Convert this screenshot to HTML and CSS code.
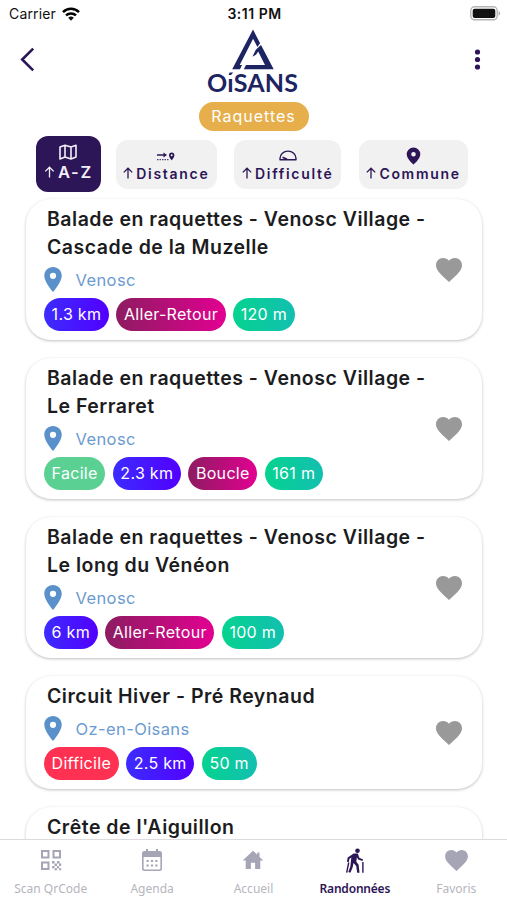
FILE: index.html
```html
<!DOCTYPE html>
<html lang="fr">
<head>
<meta charset="utf-8">
<title>Oisans - Raquettes</title>
<link rel="stylesheet" href="styles.css">
</head>
<body>
<svg width="0" height="0" class="defs" aria-hidden="true">
  <symbol id="heart" viewBox="2 3 20 18.4"><path d="M12 21.35l-1.45-1.32C5.4 15.36 2 12.28 2 8.5 2 5.42 4.42 3 7.5 3c1.74 0 3.41.81 4.5 2.09C13.09 3.81 14.76 3 16.5 3 19.58 3 22 5.42 22 8.5c0 3.78-3.4 6.86-8.55 11.54z"/></symbol>
  <symbol id="pin" viewBox="5 2 14 20"><path d="M12 2C8.13 2 5 5.13 5 9c0 5.25 7 13 7 13s7-7.75 7-13c0-3.87-3.13-7-7-7zm0 9.5A2.5 2.5 0 1 1 12 6.5a2.5 2.5 0 0 1 0 5z"/></symbol>
  <symbol id="up" viewBox="0 0 10 12"><path d="M5 11.5V1.5M.8 5.4L5 1.2l4.2 4.2" fill="none" stroke="currentColor" stroke-width="1.3"/></symbol>
</svg>
<div class="app">
  <div class="status">
    <div class="carrier">Carrier
      <svg width="18" height="14" viewBox="0 0 18 14"><g fill="none" stroke="#000" stroke-width="2.5"><path d="M1 5.1a11.5 11.5 0 0 1 16 0"/><path d="M4 8.4a7.2 7.2 0 0 1 10 0"/></g><path d="M6.2 10.8a4 4 0 0 1 5.6 0L9 13.7z"/></svg>
    </div>
    <div class="clock">3:11 PM</div>
    <svg class="battery" width="31" height="15" viewBox="0 0 31 15"><rect x=".8" y=".8" width="26.4" height="13" rx="3.8" fill="#fff" stroke="#b5b5b5" stroke-width="1.4"/><rect x="2.7" y="2.7" width="22.6" height="9.2" rx="2"/><path d="M28.6 5c2 .8 2 3.8 0 4.6z" fill="#aaa"/></svg>
  </div>
  <header class="header">
    <svg width="15" height="25" viewBox="0 0 15 25"><path d="M13.2 1.6L2.2 12.5l11 10.9" fill="none" stroke="#2d1657" stroke-width="2.6"/></svg>
    <div class="brand">
      <svg class="logo" width="92" height="66" viewBox="0 0 92 66">
        <g fill="#1c2461">
          <path d="M45 1.500L24.200 41.300H32l2-4.400h-2.300L45.100 10.700l4.300 8.300 2.700-3.800z"/>
          <path d="M53 17.100L47.800 21.700l-3.400 7 3.600-2 2.200-3.200 6.800 13.400H38l-2.200 4.400h29.900z"/>
        </g>
        <g class="wordmark"><text x="-1" y="63.600" textLength="91" lengthAdjust="spacing">OıSANS</text></g>
        <path d="M20.600 47l1-2.600h3.600L23 47z" fill="#1c2461"/>
      </svg>
      <div class="category">Raquettes</div>
    </div>
    <svg class="dots" width="7" height="21" viewBox="0 0 7 21"><circle cx="3.5" cy="3" r="2.6"/><circle cx="3.5" cy="10.5" r="2.6"/><circle cx="3.5" cy="18" r="2.6"/></svg>
  </header>
  <nav class="sorts">
    <button class="sort az">
      <svg width="18" height="16" viewBox="0 0 18 16"><path class="line" stroke-width="1.6" d="M1 3l5-1.8 6 1.8 5-1.8v11.9l-5 1.8-6-1.8-5 1.8zM6 1.2v11.9M12 3v11.9"/></svg>
      <span><svg class="arrow" width="11" height="12"><use href="#up"/></svg>A-Z</span>
    </button>
    <button class="sort distance">
      <svg width="18" height="9" viewBox="0 0 18 9"><path d="M0 3h8" stroke="currentColor" stroke-width="1.5"/><path d="M6.5.6L10 3 6.500 5.400z"/><path d="M0 7.700h12" stroke="currentColor" stroke-width="1" stroke-dasharray="1.500 1"/><path d="M14.700.6a2.700 2.700 0 0 0-2.700 2.700c0 2.200 2.700 5 2.700 5s2.700-2.800 2.700-5A2.700 2.700 0 0 0 14.700.6zm0 3.600a1 1 0 1 1 0-2 1 1 0 0 1 0 2z" fill-rule="evenodd"/></svg>
      <span><svg class="arrow" width="10" height="12"><use href="#up"/></svg>Distance</span>
    </button>
    <button class="sort difficulty">
      <svg width="18" height="11" viewBox="0 0 18 11"><path class="line" d="M1 9.800V8.500a8 7.400 0 0 1 16 0v1.300z" stroke-width="1.400"/><path class="line" d="M3.500 7.300L8 9.300" stroke-width="1.500"/></svg>
      <span><svg class="arrow" width="10" height="12"><use href="#up"/></svg>Difficulté</span>
    </button>
    <button class="sort town">
      <svg width="15" height="18" viewBox="0 0 15 18"><path fill-rule="evenodd" d="M7.500.5A6.800 6.800 0 0 0 .7 7.200C.7 12 7.500 17.500 7.500 17.500s6.800-5.500 6.800-10.300A6.800 6.800 0 0 0 7.500.5zm0 9a2.300 2.300 0 1 1 0-4.600 2.300 2.300 0 0 1 0 4.600z"/></svg>
      <span><svg class="arrow" width="10" height="12"><use href="#up"/></svg>Commune</span>
    </button>
  </nav>
  <main class="list">
    <article class="card">
      <div class="info">
        <h2>Balade en raquettes - Venosc Village -<br>Cascade de la Muzelle</h2>
        <div class="place"><svg width="18" height="25"><use href="#pin"/></svg>Venosc</div>
        <div class="tags"><span class="km">1.3 km</span><span class="kind">Aller-Retour</span><span class="climb">120 m</span></div>
      </div>
      <svg class="fav" width="26" height="24"><use href="#heart"/></svg>
    </article>
    <article class="card">
      <div class="info">
        <h2>Balade en raquettes - Venosc Village -<br>Le Ferraret</h2>
        <div class="place"><svg width="18" height="25"><use href="#pin"/></svg>Venosc</div>
        <div class="tags"><span class="easy">Facile</span><span class="km">2.3 km</span><span class="kind">Boucle</span><span class="climb">161 m</span></div>
      </div>
      <svg class="fav" width="26" height="24"><use href="#heart"/></svg>
    </article>
    <article class="card">
      <div class="info">
        <h2>Balade en raquettes - Venosc Village -<br>Le long du Vénéon</h2>
        <div class="place"><svg width="18" height="25"><use href="#pin"/></svg>Venosc</div>
        <div class="tags"><span class="km">6 km</span><span class="kind">Aller-Retour</span><span class="climb">100 m</span></div>
      </div>
      <svg class="fav" width="26" height="24"><use href="#heart"/></svg>
    </article>
    <article class="card">
      <div class="info">
        <h2>Circuit Hiver - Pré Reynaud</h2>
        <div class="place"><svg width="18" height="25"><use href="#pin"/></svg>Oz-en-Oisans</div>
        <div class="tags"><span class="hard">Difficile</span><span class="km">2.5 km</span><span class="climb">50 m</span></div>
      </div>
      <svg class="fav" width="26" height="24"><use href="#heart"/></svg>
    </article>
    <article class="card last">
      <div class="info"><h2>Crête de l'Aiguillon</h2></div>
    </article>
  </main>
  <nav class="tabs">
    <a class="tab"><svg width="22" height="22" viewBox="0 0 22 22"><g fill="none" stroke="currentColor" stroke-width="2"><path d="M2 2h6.500v6.500H2zM13.500 2H20v6.500h-6.500zM2 13.500h6.500V20H2z"/></g><path d="M12 12h2.500v2.500H12zM17 12h2.500v2.500H17zM14.500 14.500H17V17h-2.500zM19 14.500h2.200V17H19zM12 17h2.500v2.200H12zM17 17h2v2.200h-2zM14.500 19.200H17v2h-2.500zM19 19.200h2.200v2H19z"/></svg><span>Scan QrCode</span></a>
    <a class="tab"><svg width="22" height="24" viewBox="0 0 22 24"><path fill-rule="evenodd" d="M3.500 3H5V1h2v2h8V1h2v2h1.500A2.500 2.500 0 0 1 21 5.500V20.500A2.500 2.500 0 0 1 18.500 23h-15A2.500 2.500 0 0 1 1 20.500v-15A2.500 2.500 0 0 1 3.500 3zM2.600 9v11.500a1 1 0 0 0 1 1h14.800a1 1 0 0 0 1-1V9z"/><path d="M5.500 13h11M5.500 17.500h11" stroke="currentColor" stroke-width="2.200" stroke-dasharray="2.200"/></svg><span>Agenda</span></a>
    <a class="tab"><svg width="22" height="20" viewBox="0 0 22 20"><path d="M11 .8L.7 10.500h3V19h5.200v-6.200h4.200V19h5.200v-8.500h3L17.500 7V2.500h-2.200v2.300z"/></svg><span>Accueil</span></a>
    <a class="tab active"><svg width="18" height="25" viewBox="0 0 18 25"><circle cx="11.500" cy="2.700" r="2.300"/><path d="M7.700 5.500h4.100l1.500 4.200 3.800 1.700-.6 1.700-4.400-1.600-1.200-2.200-.6 4.400 2.300 3.100.9 7.900h-2.300l-1-6.600-2.700-3.200-.9 4.500-2.200 5.400-2.100-.8 2-5.200 1-9.400-1.900 1.600-.6 3.100-1.900-.4.800-4.100z"/><path d="M16.900 14v10.800M2.700 14.500L.7 24.700" stroke="currentColor" stroke-width="1.400"/></svg><span>Randonnées</span></a>
    <a class="tab"><svg width="23" height="21"><use href="#heart"/></svg><span>Favoris</span></a>
  </nav>
</div>
</body>
</html>
```
FILE: styles.css
```css
* { box-sizing: border-box; }
body { margin: 0; background: #fff; font-family: Inter, sans-serif; }
.defs { display: block; height: 0; }
svg { fill: currentColor; flex: none; }
.line { fill: none; stroke: currentColor; stroke-linejoin: round; }
.app { width: 507px; height: 900px; overflow: hidden; display: flex; flex-direction: column; }
.status { height: 28px; flex: none; display: grid; grid-template-columns: 1fr auto 1fr; align-items: center; padding: 0 7px 1px 9px; color: #111; }
.carrier { display: flex; align-items: center; gap: 6px; font-size: 14px; letter-spacing: .15px; }
.clock { font-size: 14px; font-weight: 600; letter-spacing: .5px; }
.battery { justify-self: end; margin-right: -1px; margin-top: -1px; }
.header { height: 108px; flex: none; display: flex; justify-content: space-between; padding: 0 26px 0 20px; }
.header > svg { margin-top: 19px; }
.header > .dots { margin-top: 21px; color: #2d1657; }
.brand { display: flex; flex-direction: column; align-items: center; margin-right: 2px; }
.logo { display: block; overflow: visible; }
.wordmark { font: 700 25px "Lato", sans-serif; fill: #1c2461; }
.category { width: 110px; height: 29px; margin-top: 8px; border-radius: 15px; background: #e6af4c; color: #fff; font-size: 16px; line-height: 29px; letter-spacing: 1px; text-align: center; }
.sorts { height: 56px; flex: none; display: flex; align-items: center; padding: 0 39px 0 35.500px; }
.sort { height: 49px; border: 0; border-radius: 12px; padding: 0; background: #f1f1f1; color: #2d1657; display: flex; flex-direction: column; align-items: center; justify-content: flex-end; font: 600 14px Inter, sans-serif; letter-spacing: 1.700px; }
.sort span { display: flex; align-items: center; height: 17px; margin: 0 0 7px; white-space: nowrap; }
.sort > svg { margin-bottom: 4px; }
.arrow { margin-right: 3px; }
.az { width: 66px; height: 56px; background: #2d1657; color: #f3eff8; font-size: 16.500px; }
.az > svg { margin-bottom: 4px; }
.az span { margin-bottom: 11.500px; }
.distance { width: 101px; margin-left: 14.500px; }
.difficulty { width: 107px; margin-left: 17.500px; }
.town { width: 109px; margin-left: 18px; }
.town > svg { margin-bottom: 0; }
.list { flex: 1; overflow: hidden; padding: 7px 25px 0 26px; display: flex; flex-direction: column; gap: 18px; }
.card { flex: none; border-radius: 25px; background: #fff; box-shadow: 0 1px 3px rgba(0,0,0,.25); padding: 6px 20px 9px 18px; display: flex; align-items: center; justify-content: space-between; }
.last { padding-bottom: 60px; }
h2 { margin: 0 0 0 3px; font-size: 19.500px; font-weight: 600; line-height: 28px; letter-spacing: .5px; color: #1c1c1e; white-space: nowrap; }
.place { height: 37px; display: flex; align-items: center; gap: 13.500px; font-size: 16.500px; letter-spacing: .4px; color: #6c9bd1; }
.place svg { color: #5b91cb; }
.tags { display: flex; gap: 7.500px; }
.tags span { height: 33px; border-radius: 17px; padding: 0 7.600px; color: #fff; font-size: 16px; line-height: 33px; letter-spacing: .3px; white-space: nowrap; }
.km { background: linear-gradient(90deg, #3c2cff, #5200ff); }
.kind { background: linear-gradient(90deg, #8d1c61, #e20091); }
.climb { background: linear-gradient(90deg, #06d38f, #12bfb0); }
.easy { background: #5bd093; }
.hard { background: #ff3152; }
.fav { color: #999; margin-top: 4px; }
.tabs { height: 61px; flex: none; border-top: 1px solid #dcdcde; background: #fff; display: grid; grid-template-columns: repeat(5, 101.400px); }
.tab { display: flex; flex-direction: column; align-items: center; justify-content: space-between; color: #a5a5b5; font: 12px "Noto Sans", sans-serif; padding-bottom: 3px; }
.tab svg { margin: auto; }
.tab span { line-height: 17px; color: #b5b5bd; }
.active { color: #2d1657; font-weight: 600; }
.active span { color: #2d1657; letter-spacing: -.2px; }
```
